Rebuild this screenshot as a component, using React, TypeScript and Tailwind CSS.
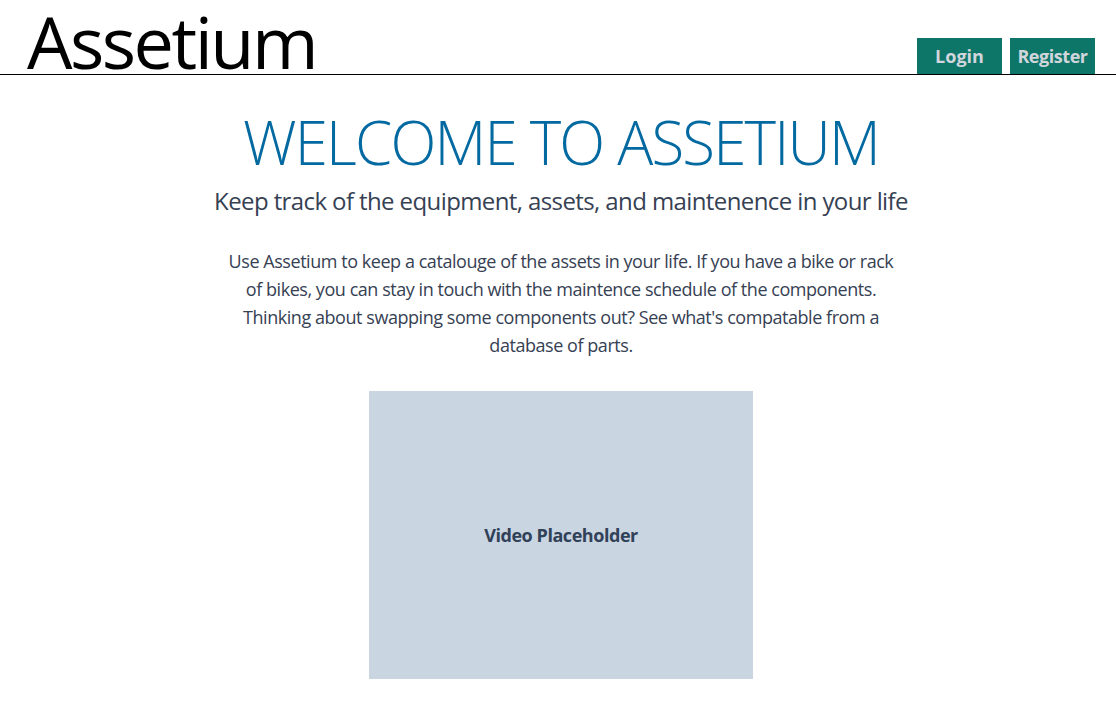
export default function App() {
  return (
    <div className="min-h-screen bg-white font-['Open_Sans',sans-serif] text-black">
      {/* Top bar */}
      <header className="flex items-end justify-between border-b border-black pl-[27px] pr-[21px]">
        <h1 className="pt-2 text-[72px] leading-[66px] tracking-[-0.035em]">Assetium</h1>
        <div className="flex gap-2">
          <button
            type="button"
            className="h-9 w-[85px] bg-[#0e7569] text-lg font-bold text-gray-300"
          >
            Login
          </button>
          <button
            type="button"
            className="h-9 w-[85px] bg-[#0e7569] text-lg font-bold tracking-tight text-gray-300"
          >
            Register
          </button>
        </div>
      </header>

      <main className="flex flex-col items-center pl-[6px]">
        <h2 className="mt-[37px] text-6xl font-light tracking-[-0.03em] text-[#0369a1]">
          WELCOME TO ASSETIUM
        </h2>
        <p className="mt-[13px] text-2xl tracking-tight text-gray-700">
          Keep track of the equipment, assets, and maintenence in your life
        </p>
        <p className="mt-[30px] max-w-2xl text-center text-lg leading-7 tracking-tight text-gray-700">
          Use Assetium to keep a catalouge of the assets in your life. If you have a bike or rack
          of bikes, you can stay in touch with the maintence schedule of the components. Thinking
          about swapping some components out? See what's compatable from a database of parts.
        </p>
        <div className="mt-[32px] flex h-72 w-96 items-center justify-center bg-slate-300">
          <span className="text-lg font-bold tracking-tight text-slate-700">Video Placeholder</span>
        </div>
      </main>
    </div>
  );
}
